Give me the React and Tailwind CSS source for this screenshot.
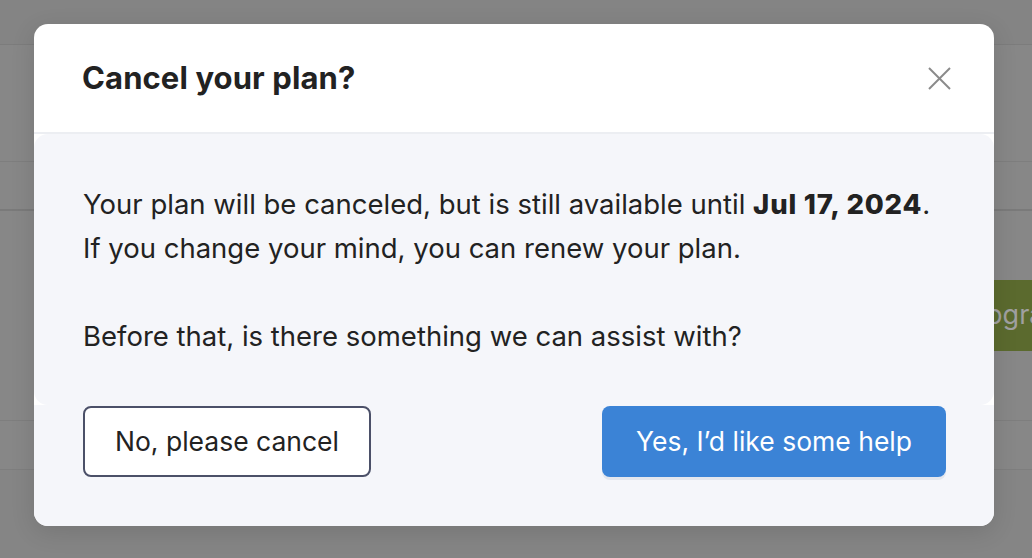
import React from 'react';

const FONT = { fontFamily: 'Inter, "Noto Sans", sans-serif' };

function CloseIcon() {
  return (
    <svg width="23" height="23" viewBox="0 0 23 23" fill="none" stroke="#8a8a8a" strokeWidth="2">
      <line x1="1" y1="1" x2="22" y2="22" />
      <line x1="22" y1="1" x2="1" y2="22" />
    </svg>
  );
}

function BackgroundPage() {
  return (
    <div className="flex flex-col">
      <div className="h-[45px] bg-[#848484] border-b border-[#7c7c7c]" />
      <div className="h-[117px] bg-[#878787] border-b border-[#7e7e7e]" />
      <div className="h-[49px] bg-[#878787] border-b-2 border-[#7a7a7a]" />
      <div className="flex h-[210px] items-center pl-[936px] bg-[#878787] border-b border-[#7e7e7e]">
        <div className="flex h-[71px] items-center whitespace-nowrap rounded-lg bg-[#5b6a2e] px-[30px] text-[27px] text-[#a0a0a0]">
          Upgrade
        </div>
      </div>
      <div className="h-[49px] bg-[#878787] border-b border-[#7e7e7e]" />
      <div className="h-[100px] bg-[#858585]" />
    </div>
  );
}

export default function App() {
  return (
    <div className="relative h-[558px] w-full overflow-hidden" style={FONT}>
      <BackgroundPage />

      <div className="absolute left-[34px] top-[24px] w-[960px] overflow-hidden rounded-[14px] bg-white shadow-[0_6px_24px_rgba(0,0,0,0.12)]">
        <div className="flex h-[108px] items-center justify-between pl-[48px] pr-[43px]">
          <h2 className="text-[31px] font-bold tracking-[0.1px] text-[#222]">Cancel your plan?</h2>
          <button type="button" className="flex h-[23px] w-[23px] items-center justify-center">
            <CloseIcon />
          </button>
        </div>
        <div className="h-[2px] bg-[#eceef2]" />

        <div className="rounded-[14px] bg-[#f5f6fa] px-[49px] pt-[48px] pb-[47px] text-[27.5px] leading-[44px] text-[#222]">
          <p>
            Your plan will be canceled, but is still available until{' '}
            <strong className="font-extrabold tracking-[0.8px]">Jul 17, 2024</strong>.
          </p>
          <p>If you change your mind, you can renew your plan.</p>
          <p>&nbsp;</p>
          <p>Before that, is there something we can assist with?</p>
        </div>

        <div className="flex items-start justify-between bg-[#f5f6fa] pl-[49px] pr-[48px] pt-[1px] pb-[49px]">
          <button
            type="button"
            className="flex h-[71px] w-[288px] items-center justify-center rounded-lg border-2 border-[#4b5068] bg-white text-[26.5px] text-[#222]"
          >
            No, please cancel
          </button>
          <button
            type="button"
            className="flex h-[71px] w-[344px] items-center justify-center rounded-lg bg-[#3b83d6] text-[26.5px] text-white shadow-[0_3px_0_#e4e7ee]"
          >
            Yes, I’d like some help
          </button>
        </div>
      </div>
    </div>
  );
}
